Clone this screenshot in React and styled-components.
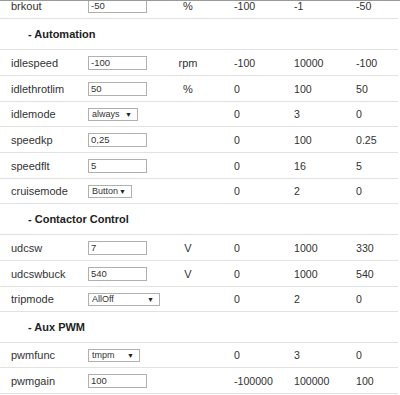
import React from "react";
import styled, { createGlobalStyle } from "styled-components";

const GlobalStyle = createGlobalStyle`
  html, body {
    margin: 0;
    padding: 0;
    background: #fff;
  }
  body {
    font-family: "Liberation Sans", Arial, sans-serif;
    color: #333;
  }
`;

const sections = [
  {
    rows: [{ name: "brkout", value: "-50", unit: "%", min: "-100", max: "-1", def: "-50" }],
  },
  {
    title: "Automation",
    rows: [
      { name: "idlespeed", value: "-100", unit: "rpm", min: "-100", max: "10000", def: "-100" },
      { name: "idlethrotlim", value: "50", unit: "%", min: "0", max: "100", def: "50" },
      { name: "idlemode", select: "always", width: 50, min: "0", max: "3", def: "0" },
      { name: "speedkp", value: "0,25", min: "0", max: "100", def: "0.25" },
      { name: "speedflt", value: "5", min: "0", max: "16", def: "5" },
      { name: "cruisemode", select: "Button", width: 44, min: "0", max: "2", def: "0" },
    ],
  },
  {
    title: "Contactor Control",
    rows: [
      { name: "udcsw", value: "7", unit: "V", min: "0", max: "1000", def: "330" },
      { name: "udcswbuck", value: "540", unit: "V", min: "0", max: "1000", def: "540" },
      { name: "tripmode", select: "AllOff", width: 72, min: "0", max: "2", def: "0" },
    ],
  },
  {
    title: "Aux PWM",
    rows: [
      { name: "pwmfunc", select: "tmpm", width: 52, min: "0", max: "3", def: "0" },
      { name: "pwmgain", value: "100", min: "-100000", max: "100000", def: "100" },
    ],
  },
];

function ParamRow({ row }) {
  return (
    <Row $h={row.select ? 25 : 26}>
      <Label>{row.name}</Label>
      <Cell>
        {row.select ? (
          <SelectBox $w={row.width}>
            <span>{row.select}</span>
            <Arrow>▼</Arrow>
          </SelectBox>
        ) : (
          <TextInput defaultValue={row.value} />
        )}
      </Cell>
      <Unit>{row.unit || ""}</Unit>
      <Num>{row.min}</Num>
      <Num>{row.max}</Num>
      <Num>{row.def}</Num>
    </Row>
  );
}

export default function App() {
  return (
    <>
      <GlobalStyle />
      <Viewport>
        <Table>
          {sections.map((s, i) => (
            <React.Fragment key={i}>
              {s.title && (
                <HeaderRow>
                  <SectionTitle>- {s.title}</SectionTitle>
                </HeaderRow>
              )}
              {s.rows.map((r) => (
                <ParamRow key={r.name} row={r} />
              ))}
            </React.Fragment>
          ))}
        </Table>
      </Viewport>
    </>
  );
}

const Viewport = styled.div`
  width: 400px;
  height: 395px;
  overflow: hidden;
  border-top: 1px solid #9a9a9a;
  box-sizing: border-box;
`;

const Table = styled.div`
  margin-top: -8px;
  width: 398px;
`;

const Row = styled.div`
  box-sizing: border-box;
  display: grid;
  grid-template-columns: 88px 72px 56px 60px 62px 1fr;
  align-items: center;
  height: ${(p) => p.$h}px;
  border-bottom: 1px solid #e2e2e2;
  font-size: 11px;
`;

const HeaderRow = styled.div`
  box-sizing: border-box;
  display: flex;
  align-items: center;
  height: 31px;
  border-bottom: 1px solid #e2e2e2;
`;

const SectionTitle = styled.div`
  padding-left: 28px;
  font-size: 11px;
  font-weight: bold;
  color: #222;
`;

const Label = styled.div`
  padding-left: 11px;
  color: #333;
`;

const Cell = styled.div`
  display: flex;
  align-items: center;
`;

const Unit = styled.div`
  text-align: center;
  color: #333;
`;

const Num = styled.div`
  padding-left: 18px;
  font-size: 10.6px;
  color: #333;
`;

const TextInput = styled.input`
  box-sizing: border-box;
  width: 59px;
  height: 14px;
  margin: 0;
  padding: 0 0 0 2px;
  border: 1px solid #b0b0b0;
  border-radius: 0;
  font-family: "Liberation Sans", Arial, sans-serif;
  font-size: 9.5px;
  color: #333;
  outline: none;
`;

const SelectBox = styled.div`
  box-sizing: border-box;
  width: ${(p) => p.$w}px;
  height: 13px;
  display: flex;
  align-items: center;
  justify-content: space-between;
  padding: 0 5px 0 3px;
  border: 1px solid #b0b0b0;
  font-size: 9px;
  color: #333;
  background: #fff;
`;

const Arrow = styled.span`
  font-size: 7px;
  color: #222;
`;
